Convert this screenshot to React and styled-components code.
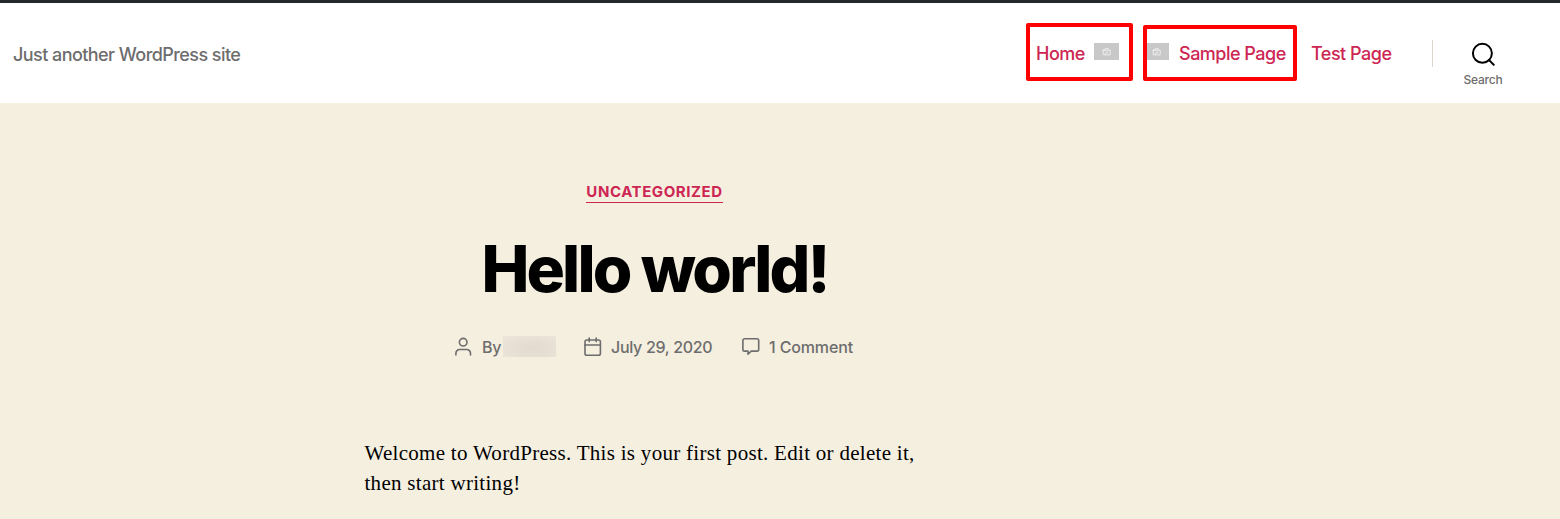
import React from "react";
import styled, { createGlobalStyle } from "styled-components";

const Global = createGlobalStyle`
  *, *::before, *::after { box-sizing: border-box; }
  body { margin: 0; background: #f5efe0; font-family: Inter, "Liberation Sans", sans-serif; overflow: hidden; }
`;

const Page = styled.div`
  height: 519px;
  background: #f5efe0;
  overflow: hidden;
`;

const AdminBar = styled.div`
  height: 3px;
  background: #23282d;
`;

const Header = styled.header`
  height: 100px;
  padding: 0 46px 0 13px;
  display: flex;
  justify-content: space-between;
  align-items: center;
  background: #fff;
`;

const Tagline = styled.p`
  margin: 4px 0 0;
  font-size: 18px;
  font-weight: 450;
  line-height: 22px;
  letter-spacing: -0.56px;
  color: #6d6d6d;
`;

const HeaderRight = styled.div`
  display: flex;
  align-items: center;
`;

const Menu = styled.ul`
  list-style: none;
  margin: 2px 0 0;
  padding: 0;
  display: flex;
  gap: 25px;
`;

const MenuItem = styled.li`
  position: relative;
  display: flex;
  gap: ${(p) => p.$gap || 10}px;
  width: ${(p) => p.$width}px;
  height: 24px;
`;

const MenuLink = styled.a`
  font-size: 18px;
  font-weight: 500;
  line-height: 24px;
  letter-spacing: -0.5px;
  white-space: nowrap;
  color: #cd2653;
`;

const Thumb = styled.span`
  flex: none;
  width: 25px;
  height: 17px;
  margin-top: 1px;
  background: #c8c8c8;
  display: flex;
  align-items: center;
  justify-content: center;
`;

const Highlight = styled.span`
  position: absolute;
  top: ${(p) => p.$top}px;
  left: ${(p) => p.$left}px;
  width: ${(p) => p.$width}px;
  height: ${(p) => p.$height}px;
  border: 4px solid #f00;
  border-radius: 2px;
`;

const Divider = styled.span`
  width: 1px;
  height: 27px;
  margin: 0 19px 0 40px;
  background: #dcd7ca;
`;

const SearchButton = styled.div`
  width: 62px;
  height: 100px;
  padding-top: 39px;
  display: flex;
  flex-direction: column;
  align-items: center;
  color: #000;
`;

const SearchLabel = styled.span`
  margin-top: 6px;
  font-size: 12px;
  line-height: 15px;
  font-weight: 550;
  letter-spacing: -0.25px;
  color: #6d6d6d;
`;

const Post = styled.article`
  width: 1309px;
  padding-top: 80px;
  display: flex;
  flex-direction: column;
  align-items: center;
`;

const Category = styled.a`
  height: 20px;
  font-size: 15px;
  line-height: 18px;
  font-weight: 700;
  letter-spacing: 0.57px;
  color: #cd2653;
  border-bottom: 1px solid #cd2653;
`;

const Title = styled.h1`
  margin: 30px 0 0;
  font-size: 64px;
  line-height: 72px;
  font-weight: 800;
  letter-spacing: -2.82px;
  color: #000;
`;

const MetaList = styled.ul`
  list-style: none;
  margin: 31px 0 0;
  padding: 0;
  width: 399px;
  display: flex;
`;

const MetaItem = styled.li`
  display: flex;
  align-items: center;
  flex: none;
  width: ${(p) => p.$width}px;
  height: 21px;
  font-size: 16px;
  font-weight: 500;
  letter-spacing: ${(p) => p.$spacing || -0.25}px;
  white-space: nowrap;
  color: #6d6d6d;
`;

const MetaIcon = styled.span`
  display: flex;
  margin-right: 9px;
`;

const HiddenAuthor = styled.span`
  width: 53px;
  height: 21px;
  margin-left: 2px;
  background: radial-gradient(ellipse at 55% 60%, #e2dace 0%, #e6ded2 40%, #eee6da 100%);
`;

const Content = styled.div`
  width: 580px;
  margin-top: 81px;
  font-family: "Liberation Serif", serif;
  font-size: 21px;
  line-height: 30px;
  color: #000;
`;

const Line = styled.span`
  display: block;
  white-space: nowrap;
  letter-spacing: 0.29px;
`;

const CameraThumb = () => (
  <Thumb>
    <svg width="9" height="9" viewBox="0 0 9 9" fill="none" stroke="#f2f2f2" strokeWidth="0.9">
      <path d="M.6 3.4L5.6 1l.9 1.9M1.2 3.2h7v4.6h-7z" />
      <path d="M3 7.5l1.6-2.6L6.3 6" />
    </svg>
  </Thumb>
);

const strokeProps = { fill: "none", stroke: "#6d6d6d", strokeWidth: 1.6, strokeLinecap: "round", strokeLinejoin: "round" };

const PersonIcon = () => (
  <svg width="18" height="20" viewBox="0 0 18 20" {...strokeProps}>
    <circle cx="8.2" cy="5.2" r="3.8" />
    <path d="M.9 18v-1.8a3.7 3.7 0 0 1 3.7-3.7h7.2a3.7 3.7 0 0 1 3.7 3.7V18" />
  </svg>
);

const CalendarIcon = () => (
  <svg width="18" height="20" viewBox="0 0 18 20" {...strokeProps}>
    <rect x="1" y="3" width="15.4" height="15.2" rx="1.8" />
    <path d="M1 8h15.4M5.2 1v3.6M12.2 1v3.6" />
  </svg>
);

const CommentIcon = () => (
  <svg width="18" height="20" viewBox="0 0 18 20" {...strokeProps}>
    <path d="M2.6 1.7h12.4a1.7 1.7 0 0 1 1.7 1.7v9a1.7 1.7 0 0 1-1.7 1.7H9.2L6 17.2v-3.1H2.6a1.7 1.7 0 0 1-1.7-1.7v-9a1.7 1.7 0 0 1 1.7-1.7z" />
  </svg>
);

const SearchIcon = () => (
  <svg width="24" height="24" viewBox="0 0 24 24" fill="none" stroke="#000" strokeWidth="2" strokeLinecap="round">
    <circle cx="11.4" cy="11.3" r="9.5" />
    <path d="M18.1 18.1L22.7 22.7" />
  </svg>
);

export default function App() {
  return (
    <Page>
      <Global />
      <AdminBar />
      <Header>
        <Tagline>Just another WordPress site</Tagline>
        <HeaderRight>
          <Menu>
            <MenuItem $width={83} $gap={9}>
              <MenuLink>Home</MenuLink>
              <CameraThumb />
              <Highlight $top={-19} $left={-10} $width={107} $height={58} />
            </MenuItem>
            <MenuItem $width={142}>
              <CameraThumb />
              <MenuLink>Sample Page</MenuLink>
              <Highlight $top={-17} $left={-1} $width={154} $height={56} />
            </MenuItem>
            <MenuItem $width={81}>
              <MenuLink>Test Page</MenuLink>
            </MenuItem>
          </Menu>
          <Divider />
          <SearchButton>
            <SearchIcon />
            <SearchLabel>Search</SearchLabel>
          </SearchButton>
        </HeaderRight>
      </Header>
      <Post>
        <Category>UNCATEGORIZED</Category>
        <Title>Hello world!</Title>
        <MetaList>
          <MetaItem $width={129}>
            <MetaIcon><PersonIcon /></MetaIcon>
            By
            <HiddenAuthor />
          </MetaItem>
          <MetaItem $width={158} $spacing={-0.3}>
            <MetaIcon><CalendarIcon /></MetaIcon>
            July 29, 2020
          </MetaItem>
          <MetaItem $width={114} $spacing={-0.13}>
            <MetaIcon><CommentIcon /></MetaIcon>
            1 Comment
          </MetaItem>
        </MetaList>
        <Content>
          <Line>Welcome to WordPress. This is your first post. Edit or delete it,</Line>
          <Line>then start writing!</Line>
        </Content>
      </Post>
    </Page>
  );
}
